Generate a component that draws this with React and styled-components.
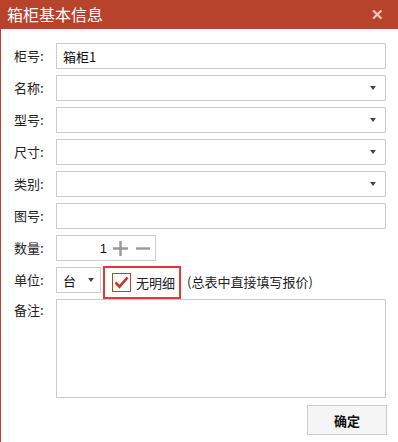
import React from 'react';
import styled, { createGlobalStyle } from 'styled-components';

const GlobalStyle = createGlobalStyle`
  html, body {
    margin: 0;
    padding: 0;
    background: #fff;
  }
  body {
    font-family: "Microsoft YaHei", "Noto Sans CJK SC", "Noto Sans", sans-serif;
    color: #222;
  }
`

const Dialog = styled.div`
  width: 398px;
  height: 442px;
  box-sizing: border-box;
  border-left: 1px solid #b7432c;
  background: #fff;
  display: flex;
  flex-direction: column;
`

const TitleBar = styled.div`
  height: 29px;
  background: #b7432c;
  display: flex;
  align-items: center;
  justify-content: space-between;
  padding: 0 14px 0 7px;
  margin-left: -1px;
`

const Title = styled.h1`
  margin: 0;
  font-size: 16px;
  font-weight: normal;
  color: #fff;
  line-height: 29px;
`

const Close = styled.span`
  color: #f2c6bb;
  font-size: 15px;
  font-weight: bold;
  line-height: 1;
  margin-top: -2px;
`

const Form = styled.div`
  display: grid;
  grid-template-columns: 42px 330px;
  grid-template-rows: repeat(8, 26px) 99px;
  row-gap: 6px;
  padding: 14px 0 0 13px;
`

const Label = styled.label`
  font-size: 13px;
  line-height: 26px;
  color: #222;
  align-self: ${p => (p.top ? 'start' : 'center')};
  margin-top: ${p => (p.top ? '-2px' : '0')};
`

const Input = styled.div`
  box-sizing: border-box;
  height: 26px;
  width: ${p => p.width || '330px'};
  border: 1px solid #cccccc;
  background: #fff;
  display: flex;
  align-items: center;
  padding: 0 5px 0 6px;
  font-size: 13px;
  color: #111;
`

const Caret = styled.span`
  margin-left: auto;
  width: 0;
  height: 0;
  border-left: 3.5px solid transparent;
  border-right: 3.5px solid transparent;
  border-top: 4px solid #444;
  margin-right: ${p => p.right || '4px'};
`

const Number = styled.span`
  margin-left: auto;
  color: #111;
  font-family: "Liberation Sans", Arial, sans-serif;
  margin-right: 6px;
`

const Spin = styled.svg`
  display: block;
  margin-left: ${p => p.gap || '0px'};
`

const UnitRow = styled.div`
  display: flex;
  align-items: center;
  gap: 2px;
`

const Highlight = styled.div`
  box-sizing: border-box;
  height: 33px;
  margin-top: 4px;
  border: 2px solid #e8363a;
  display: flex;
  align-items: center;
  padding: 0 4px 0 7px;
  gap: 5px;
  font-size: 13px;
`

const Check = styled.span`
  box-sizing: border-box;
  width: 19px;
  height: 19px;
  border: 1px solid #b7432c;
  display: flex;
  align-items: center;
  justify-content: center;
  margin-top: 1px;
`

const Hint = styled.span`
  font-size: 13px;
  color: #222;
  margin-left: 4px;
  margin-top: 2px;
`

const Memo = styled.div`
  box-sizing: border-box;
  width: 330px;
  height: 99px;
  border: 1px solid #cccccc;
`

const Footer = styled.div`
  display: flex;
  justify-content: flex-end;
  padding: 7px 11px 0 0;
`

const Button = styled.button`
  box-sizing: border-box;
  width: 80px;
  height: 30px;
  border: 1px solid #cccccc;
  background: #f5f5f5;
  font-family: inherit;
  font-size: 13px;
  font-weight: bold;
  color: #111;
  padding: 0;
`

const selects = ['名称', '型号', '尺寸', '类别'];

export default function App() {
  return (
    <>
      <GlobalStyle />
      <Dialog>
        <TitleBar>
          <Title>箱柜基本信息</Title>
          <Close>✕</Close>
        </TitleBar>
        <Form>
          <Label>柜号:</Label>
          <Input>箱柜1</Input>
          {selects.map(s => (
            <React.Fragment key={s}>
              <Label>{s}:</Label>
              <Input><Caret /></Input>
            </React.Fragment>
          ))}
          <Label>图号:</Label>
          <Input />
          <Label>数量:</Label>
          <Input width="100px">
            <Number>1</Number>
            <Spin width="15" height="15" viewBox="0 0 15 15">
              <path d="M7.5 0v15M0 7.5h15" stroke="#999" strokeWidth="2.4" />
            </Spin>
            <Spin gap="8px" width="14" height="15" viewBox="0 0 14 15">
              <path d="M0 7.5h14" stroke="#999" strokeWidth="2.4" />
            </Spin>
          </Input>
          <Label>单位:</Label>
          <UnitRow>
            <Input width="45px">台<Caret right="1px" /></Input>
            <Highlight>
              <Check>
                <svg width="15" height="13" viewBox="0 0 15 13">
                  <path d="M1.5 6.5l4 4.2L13.5 1.5" fill="none" stroke="#c0392b" strokeWidth="2.6" />
                </svg>
              </Check>
              无明细
            </Highlight>
            <Hint>(总表中直接填写报价)</Hint>
          </UnitRow>
          <Label top>备注:</Label>
          <Memo />
        </Form>
        <Footer>
          <Button>确定</Button>
        </Footer>
      </Dialog>
    </>
  );
}
